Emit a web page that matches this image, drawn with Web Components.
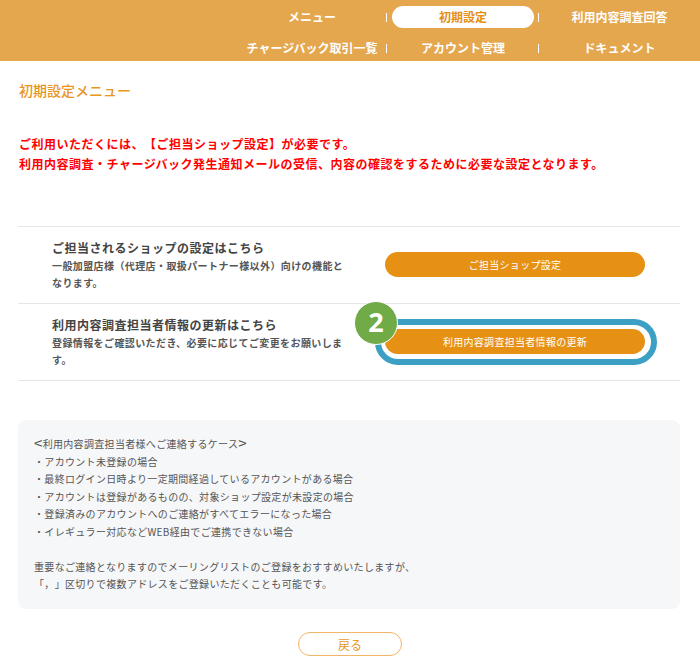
<!DOCTYPE html>
<html lang="ja"><head><meta charset="utf-8"><title>初期設定メニュー</title>
<style>
html,body{margin:0;padding:0;background:#fff}
body{font-family:"Noto Sans CJK JP","Noto Sans",sans-serif;color:#333;width:700px;height:668px;overflow:hidden;text-spacing-trim:space-all}
</style></head><body>
<app-header></app-header>
<app-main>
  <page-title>初期設定メニュー</page-title>
  <alert-text>ご利用いただくには、【ご担当ショップ設定】が必要です。<br>利用内容調査・チャージバック発生通知メールの受信、内容の確認をするために必要な設定となります。</alert-text>
  <setting-list>
    <setting-row heading="ご担当されるショップの設定はこちら" label="ご担当ショップ設定">一般加盟店様（代理店・取扱パートナー様以外）向けの機能となります。</setting-row>
    <setting-row heading="利用内容調査担当者情報の更新はこちら" label="利用内容調査担当者情報の更新" callout="2">登録情報をご確認いただき、必要に応じてご変更をお願いします。</setting-row>
  </setting-list>
  <info-box><span style="font-size:15px;line-height:0;position:relative;top:1px">&lt;</span>利用内容調査担当者様へご連絡するケース<span style="font-size:15px;line-height:0;position:relative;top:1px">&gt;</span><br>・アカウント未登録の場合<br>・最終ログイン日時より一定期間経過しているアカウントがある場合<br>・アカウントは登録があるものの、対象ショップ設定が未設定の場合<br>・登録済みのアカウントへのご連絡がすべてエラーになった場合<br>・イレギュラー対応などWEB経由でご連携できない場合<br><br>重要なご連絡となりますのでメーリングリストのご登録をおすすめいたしますが、<br>「，」区切りで複数アドレスをご登録いただくことも可能です。</info-box>
  <back-button>戻る</back-button>
</app-main>
<script>
function def(name, css, html){
  customElements.define(name, class extends HTMLElement{
    connectedCallback(){
      if(this.shadowRoot) return;
      const r=this.attachShadow({mode:'open'});
      r.innerHTML='<style>'+css+'</style>'+(typeof html==='function'?html(this):html);
    }
  });
}
def('app-header',`
:host{display:block;height:61px;background:#E5A74E;box-sizing:border-box;padding:6px 0 0 0}
nav{display:grid;grid-template-columns:150px 152px 161px;grid-auto-rows:31px;justify-content:end}
`,()=>`<nav>
<nav-item>メニュー</nav-item><nav-item active>初期設定</nav-item><nav-item last>利用内容調査回答</nav-item>
<nav-item>チャージバック取引一覧</nav-item><nav-item>アカウント管理</nav-item><nav-item last>ドキュメント</nav-item>
</nav>`);
def('nav-item',`
:host{display:block;position:relative;height:22px}
a{display:flex;height:20px;padding-bottom:2px;align-items:center;justify-content:center;margin:0 5px;border-radius:11px;color:#fff;font-size:12px;font-weight:700;text-decoration:none}
:host([active]) a{background:#fff;color:#E58F15}
:host::after{content:"";position:absolute;right:0;top:7px;width:1.5px;height:9px;background:#fff}
:host([last])::after{display:none}
`,()=>`<a href="#"><slot></slot></a>`);
def('app-main',`:host{display:block;padding:0 20px 0 18px}`,`<slot></slot>`);
def('page-title',`:host{display:block;padding:19px 0 0 1px;height:21px;line-height:20px;font-size:14px;font-weight:500;color:#E8961E}`,`<slot></slot>`);
def('alert-text',`:host{display:block;margin-top:33px;padding-left:1px;font-size:12px;line-height:20px;font-weight:700;color:#FF0000;letter-spacing:.5px}`,`<slot></slot>`);
def('setting-list',`:host{display:block;margin-top:52px;border-top:1px solid #E6E6E6}`,`<slot></slot>`);
def('setting-row',`
:host{display:grid;grid-template-columns:1fr 260px;align-items:center;height:76px;border-bottom:1px solid #E6E6E6;padding:0 35px 0 34px}
.t{width:295px;margin-top:-1px}
h3{margin:0;font-size:12px;line-height:18px;font-weight:700;color:#444;letter-spacing:.5px}
p{margin:0;font-size:10px;line-height:17px;font-weight:700;color:#555;letter-spacing:.4px}
.b{position:relative;height:25px;margin-top:-.5px}
a{display:flex;height:24px;padding-bottom:1px;align-items:center;justify-content:center;border-radius:13px;background:#E69114;color:#fff;font-size:10px;text-decoration:none;letter-spacing:.3px}
.ring{position:absolute;left:-10px;right:-12px;top:-10px;bottom:-11px;border:6px solid #3C9FC4;border-radius:23px;box-sizing:border-box}
.num{position:absolute;left:-31px;top:-28px;width:44px;height:44px;border-radius:50%;background:#70AB47;border:1px solid #fff;box-sizing:border-box;color:#fff;font:700 27px/40px "Open Sans",sans-serif;text-align:center}
`,el=>{
  const c=el.getAttribute('callout');
  return `<div class="t"><h3>${el.getAttribute('heading')}</h3><p><slot></slot></p></div><div class="b">${c?'<div class="ring"></div>':''}<a href="#">${el.getAttribute('label')}</a>${c?`<div class="num">${c}</div>`:''}</div>`;
});
def('info-box',`:host{display:block;margin-top:39px;height:189px;box-sizing:border-box;background:#F6F7F9;border-radius:8px;padding:15px 16px;font-size:10px;line-height:17.5px;color:#555;letter-spacing:.32px}`,`<slot></slot>`);
def('back-button',`
:host{display:flex;justify-content:center;margin-top:23px;padding-left:2px}
a{display:flex;width:104px;height:24px;box-sizing:border-box;align-items:center;justify-content:center;border:1px solid #F0B565;border-radius:12px;background:#fff;color:#E8961E;font-size:12px;text-decoration:none}
`,`<a href="#"><slot></slot></a>`);
</script>
</body></html>
